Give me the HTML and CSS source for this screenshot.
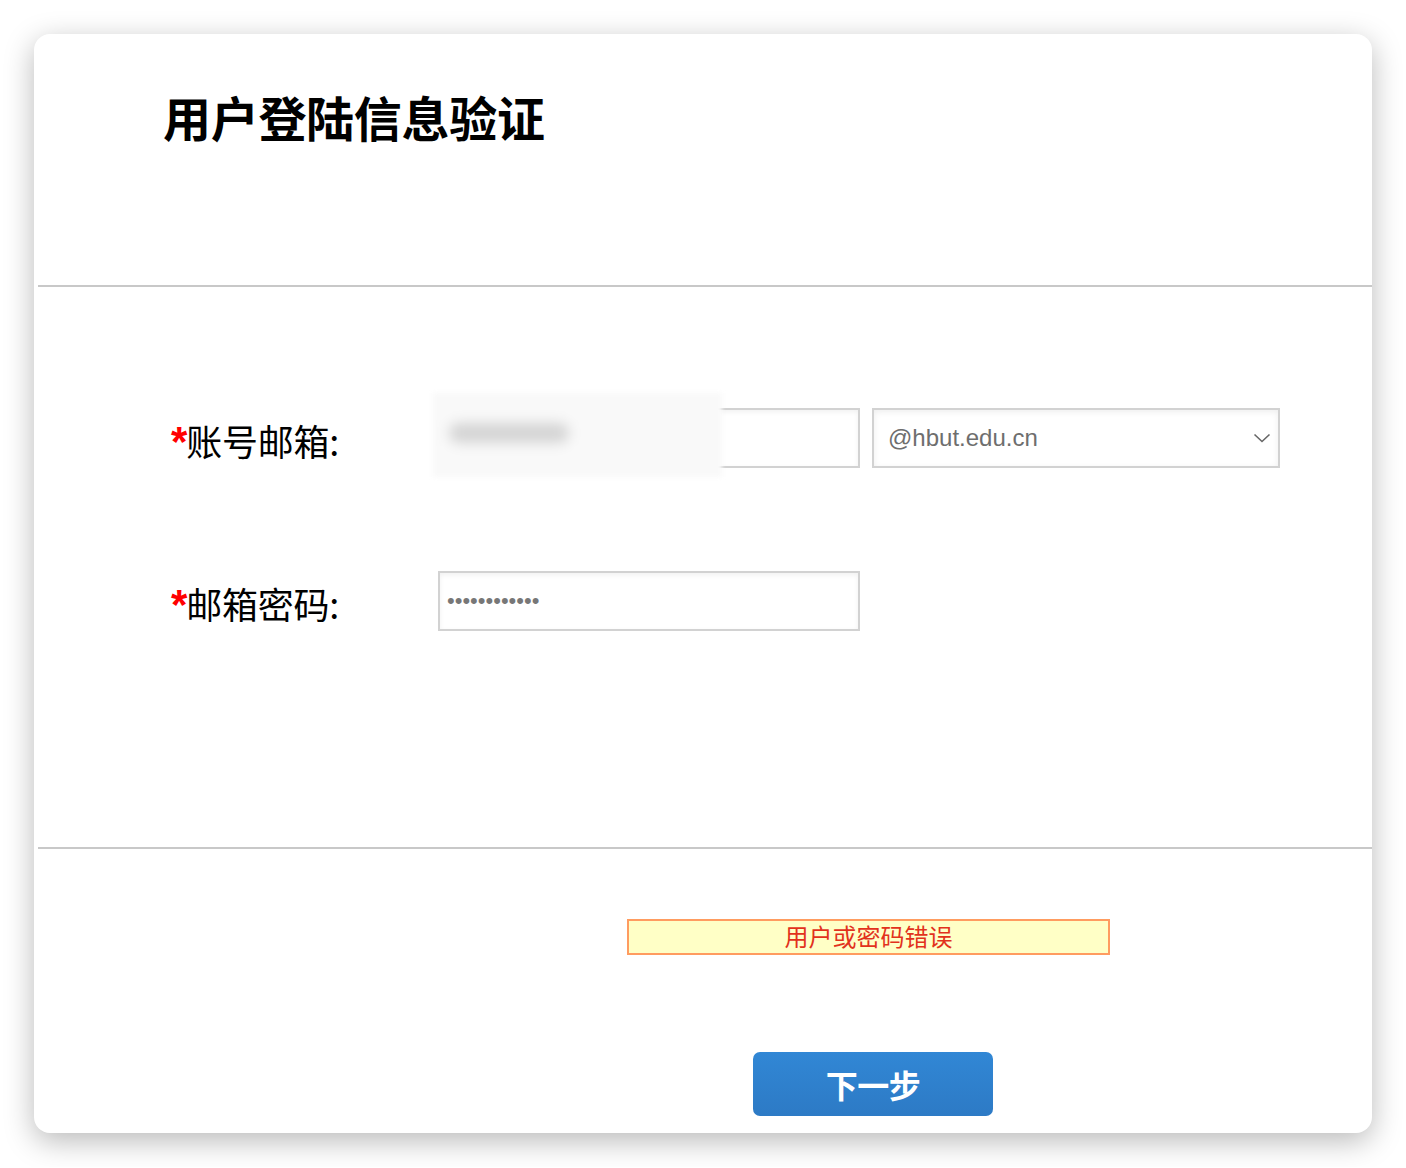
FILE: index.html
```html
<!DOCTYPE html>
<html lang="zh-CN">
<head>
<meta charset="utf-8">
<title>用户登陆信息验证</title>
<link rel="stylesheet" href="styles.css">
</head>
<body>
<div class="card">
  <div class="header">
    <h1 class="title">用户登陆信息验证</h1>
  </div>
  <div class="divider"></div>
  <div class="form">
    <div class="row">
      <label class="label"><span class="req">*</span>账号邮箱:</label>
      <div class="field">
        <input class="input" type="text" value="">
        <div class="blur"><div class="blob"></div></div>
      </div>
      <div class="select">
        <span class="select-text">@hbut.edu.cn</span>
        <svg class="chev" width="18" height="12" viewBox="0 0 18 12"><path d="M1.5 2.5 L9 9.5 L16.5 2.5" fill="none" stroke="#666" stroke-width="1.6"/></svg>
      </div>
    </div>
    <div class="row row2">
      <label class="label"><span class="req">*</span>邮箱密码:</label>
      <div class="field">
        <input class="input pw" type="password" value="abcdefghijkl">
      </div>
    </div>
  </div>
  <div class="divider"></div>
  <div class="footer">
    <div class="error">用户或密码错误</div>
    <button class="btn">下一步</button>
  </div>
</div>
</body>
</html>
```
FILE: styles.css
```css
html, body {
  margin: 0;
  padding: 0;
  background: #ffffff;
}
body {
  padding: 34px;
  font-family: "Noto Sans CJK SC", "Liberation Sans", sans-serif;
}
.card {
  width: 1338px;
  height: 1099px;
  background: #ffffff;
  border-radius: 16px;
  box-shadow: 0 8px 30px rgba(0, 0, 0, 0.28);
  overflow: hidden;
  display: flex;
  flex-direction: column;
}
.header {
  height: 251px;
  box-sizing: border-box;
  padding: 52px 0 0 129px;
}
.title {
  margin: 0;
  font-size: 48px;
  line-height: 60px;
  font-weight: 700;
  color: #000;
  letter-spacing: -0.3px;
}
.divider {
  height: 0;
  border-top: 2px solid #c8c8c8;
  margin-left: 4px;
}
.form {
  height: 560px;
  box-sizing: border-box;
  padding-top: 121px;
  display: flex;
  flex-direction: column;
  gap: 103px;
}
.row {
  display: flex;
  align-items: center;
  height: 60px;
}
.label {
  flex: 0 0 404px;
  width: 404px;
  box-sizing: border-box;
  padding-left: 137px;
  font-size: 36px;
  line-height: 50px;
  padding-top: 6px;
  color: #000;
  white-space: nowrap;
  letter-spacing: -0.2px;
}
.req {
  color: #ff0000;
  font-family: "Liberation Sans", sans-serif;
  font-size: 42px;
  font-weight: 700;
  margin-right: -1px;
}
.field {
  position: relative;
  flex: 0 0 422px;
  width: 422px;
  height: 60px;
}
.input {
  display: block;
  width: 422px;
  height: 60px;
  box-sizing: border-box;
  border: 2px solid #d2d2d2;
  box-shadow: inset 0 2px 5px rgba(0, 0, 0, 0.06);
  background: #fff;
  padding: 0 7px;
  margin: 0;
  outline: none;
  font-family: "Liberation Sans", sans-serif;
  font-size: 22px;
  color: #777;
}
.pw {
  letter-spacing: 0;
  font-size: 22px;
}
.blur {
  position: absolute;
  left: -5px;
  top: -15px;
  width: 289px;
  height: 84px;
  background: #f9f9f9;
  filter: blur(2px);
}
.blob {
  position: absolute;
  left: 16px;
  top: 30px;
  width: 120px;
  height: 20px;
  background: #d4d4d4;
  border-radius: 10px;
  filter: blur(6px);
}
.select {
  flex: 0 0 408px;
  margin-left: 12px;
  width: 408px;
  height: 60px;
  box-sizing: border-box;
  border: 2px solid #d2d2d2;
  box-shadow: inset 0 2px 6px rgba(0, 0, 0, 0.07);
  display: flex;
  align-items: center;
  justify-content: space-between;
  padding: 0 7px 0 14px;
}
.select-text {
  font-family: "Liberation Sans", sans-serif;
  font-size: 24px;
  color: #6e6e6e;
}
.chev {
  display: block;
}
.footer {
  flex: 1;
  display: flex;
  flex-direction: column;
  padding-top: 70px;
}
.error {
  margin-left: 593px;
  width: 483px;
  height: 36px;
  box-sizing: border-box;
  border: 2px solid #ff9c60;
  background: #ffffc6;
  color: #e2321c;
  font-size: 24px;
  line-height: 30px;
  text-align: center;
}
.btn {
  margin: 97px 0 0 719px;
  width: 240px;
  height: 64px;
  border: none;
  border-radius: 7px;
  background: linear-gradient(#3187d5, #2d7ac5);
  color: #fff;
  font-family: "Noto Sans CJK SC", sans-serif;
  font-size: 32px;
  line-height: 60px;
  font-weight: 700;
  letter-spacing: -0.5px;
  padding: 0;
}
```
